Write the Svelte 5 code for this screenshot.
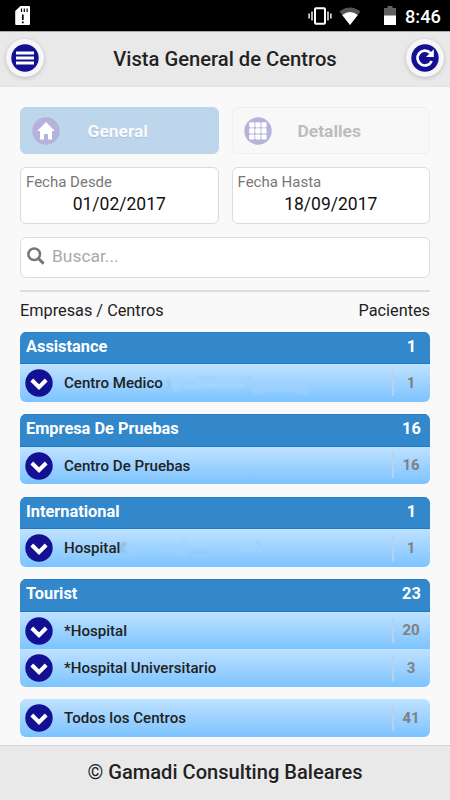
<script>
  const fechas = [
    { etiqueta: 'Fecha Desde', valor: '01/02/2017' },
    { etiqueta: 'Fecha Hasta', valor: '18/09/2017' }
  ];

  const grupos = [
    {
      empresa: 'Assistance',
      pacientes: 1,
      centros: [{ nombre: 'Centro Medico', pacientes: 1, borrado: 'medico' }]
    },
    {
      empresa: 'Empresa De Pruebas',
      pacientes: 16,
      centros: [{ nombre: 'Centro De Pruebas', pacientes: 16 }]
    },
    {
      empresa: 'International',
      pacientes: 1,
      centros: [{ nombre: 'Hospital', pacientes: 1, borrado: 'hospital' }]
    },
    {
      empresa: 'Tourist',
      pacientes: 23,
      centros: [
        { nombre: '*Hospital', pacientes: 20 },
        { nombre: '*Hospital Universitario', pacientes: 3 }
      ]
    },
    {
      empresa: '',
      pacientes: 41,
      centros: [{ nombre: 'Todos los Centros', pacientes: 41 }]
    }
  ];
</script>

<div class="pantalla">
  <div class="estado">
    <svg class="sd" width="16" height="20" viewBox="0 0 16 20">
      <path d="M5.5 0H14Q15 0 15 1V18Q15 19 14 19H1.2Q.2 19 .2 18V5Z" fill="#fff" />
      <path d="M6.5 2.5V6M9.3 2.5V6M12.1 2.5V6" stroke="#000" stroke-width="1.2" />
      <path d="M7.8 8.5V14M7.8 15.5V17.3" stroke="#000" stroke-width="1.7" />
    </svg>
    <svg class="vibrar" width="24" height="18" viewBox="0 0 24 18">
      <rect x="7" y="1.3" width="10" height="15.4" rx="1" fill="none" stroke="#fff" stroke-width="2" />
      <path d="M4 4.5V13.5M20 4.5V13.5M1.1 6.5V11.5M22.9 6.5V11.5" stroke="#fff" stroke-width="1.4" />
    </svg>
    <svg class="wifi" width="22" height="18" viewBox="0 0 22 18">
      <path d="M11 18L.5 4.5Q11-3.5 21.5 4.5Z" fill="#555" />
      <path d="M11 18L3.2 8Q11 2 18.8 8Z" fill="#fff" />
    </svg>
    <svg class="bateria" width="12" height="19" viewBox="0 0 12 19">
      <path d="M0 2H3.5V0H8.5V2H12V10H0Z" fill="#606060" />
      <path d="M0 9.5H12V19H0Z" fill="#fff" />
    </svg>
    <span class="hora">8:46</span>
  </div>

  <header>
    <button class="redondo" aria-label="Menú">
      <svg width="28" height="28" viewBox="0 0 28 28">
        <circle cx="14" cy="14" r="13.7" fill="#131094" />
        <path d="M5 9H23M5 14H23M5 19H23" stroke="#fff" stroke-width="2.8" />
      </svg>
    </button>
    <h1>Vista General de Centros</h1>
    <button class="redondo" aria-label="Actualizar">
      <svg width="28" height="28" viewBox="0 0 28 28">
        <circle cx="14" cy="14" r="13.7" fill="#131094" />
        <path d="M19.3 9A7.4 7.4 0 1 0 20.7 17" fill="none" stroke="#fff" stroke-width="2.7" />
        <path d="M22.8 5.2V13H15Z" fill="#fff" />
      </svg>
    </button>
  </header>

  <main>
    <div class="pareja">
      <button class="pestana activa">
        <svg width="28" height="28" viewBox="0 0 28 28">
          <circle cx="14" cy="14" r="13.7" fill="#b5b2dc" />
          <path d="M14 5L5.2 14H8V22.5H12V17H16V22.5H20V14H22.8Z" fill="#fff" />
        </svg>
        <span>General</span>
      </button>
      <button class="pestana">
        <svg width="28" height="28" viewBox="0 0 28 28">
          <circle cx="14" cy="14" r="13.7" fill="#b5b2dc" />
          {#each [5.2, 11.3, 17.4] as y}
            {#each [5.2, 11.3, 17.4] as x}
              <rect {x} {y} width="5.2" height="5.2" rx="0.8" fill="#fff" />
            {/each}
          {/each}
        </svg>
        <span>Detalles</span>
      </button>
    </div>

    <div class="pareja fechas">
      {#each fechas as fecha}
        <div class="fecha">
          <span class="etiqueta">{fecha.etiqueta}</span>
          <span class="valor">{fecha.valor}</span>
        </div>
      {/each}
    </div>

    <div class="buscador">
      <svg width="18" height="18" viewBox="0 0 18 18" fill="none" stroke="#777" stroke-width="2.5">
        <circle cx="7.2" cy="7.2" r="5.8" />
        <path d="M11.2 11.2L16.6 16.6" stroke-width="3" />
      </svg>
      <span>Buscar...</span>
    </div>

    <div class="titulos">
      <span>Empresas / Centros</span>
      <span>Pacientes</span>
    </div>

    <div class="lista">
      {#each grupos as grupo}
        <section class="grupo">
          {#if grupo.empresa}
            <div class="empresa">
              <span>{grupo.empresa}</span>
              <span class="total">{grupo.pacientes}</span>
            </div>
          {/if}
          {#each grupo.centros as centro}
            <div class="centro">
              <svg width="28" height="28" viewBox="0 0 28 28">
                <circle cx="14" cy="14" r="13.7" fill="#131094" />
                <path d="M6.8 11L14 18.2L21.2 11" fill="none" stroke="#fff" stroke-width="4" />
              </svg>
              <span class="nombre">{centro.nombre}</span>
              <span class="cantidad">{centro.pacientes}</span>
              {#if centro.borrado === 'medico'}
                <svg class="borrado" width="175" height="28" viewBox="0 0 175 28">
                  <path d="M25 10Q22 11 25 14T23 18" stroke="#7ea8c9" fill="none" />
                  <ellipse cx="33" cy="15" rx="6" ry="8" fill="#a5d6ff" />
                  <path d="M40 18Q70 15 102 17" stroke="#a8d8ff" stroke-width="5" fill="none" />
                  <path d="M112 20Q138 14 162 20" stroke="#9ed2ff" stroke-width="11" stroke-linecap="round" fill="none" />
                  <path d="M54 9H70M98 9H108M99 18H104" stroke="#92bfdf" fill="none" />
                </svg>
              {:else if centro.borrado === 'hospital'}
                <svg class="borrado hospital" width="170" height="28" viewBox="0 0 170 28">
                  <path d="M26 9Q20 10 22 16L27 18M27 9L24 13" stroke="#7d9fba" stroke-width="1.6" fill="none" />
                  <path d="M29 19L38 14M63 17Q74 13 88 20" stroke="#9dd2ff" stroke-width="7" fill="none" />
                  <path d="M83 9L86 6M93 18H106M157 7L161 11L158 19" stroke="#86b5d9" fill="none" />
                  <ellipse cx="151" cy="15" rx="12" ry="4" fill="#a2d5ff" />
                </svg>
              {/if}
            </div>
          {/each}
        </section>
      {/each}
    </div>
  </main>

  <footer><span class="copia">©</span> Gamadi Consulting Baleares</footer>
</div>

<style>
  :global(body) {
    margin: 0;
  }

  .pantalla {
    width: 450px;
    height: 800px;
    overflow: hidden;
    display: flex;
    flex-direction: column;
    background: #f9f9f9;
    color: #222;
    font-family: Roboto, sans-serif;
  }

  svg {
    display: block;
    flex: none;
  }

  button {
    font: inherit;
    padding: 0;
    cursor: pointer;
  }

  .estado {
    height: 31px;
    box-sizing: border-box;
    flex: none;
    display: flex;
    align-items: center;
    padding: 0 10px 0 15px;
    background: #000;
    color: #fff;
  }

  .vibrar {
    margin-left: auto;
  }

  .wifi {
    margin-left: 7px;
  }

  .bateria {
    margin-left: 23px;
  }

  .hora {
    width: 35px;
    margin-left: 9px;
    font-size: 18.2px;
    font-weight: 500;
    line-height: 31px;
    padding-top: 2px;
    white-space: nowrap;
  }

  header {
    height: 56px;
    box-sizing: border-box;
    flex: none;
    display: flex;
    align-items: center;
    justify-content: space-between;
    padding: 0 6px;
    background: #e9e9e9;
    border-top: 1px solid #aaa;
    border-bottom: 1px solid #e2e2e2;
  }

  h1 {
    margin: 0;
    font-size: 20.2px;
    font-weight: 500;
    text-shadow: 0 1px 0 #f3f3f3;
  }

  .redondo {
    width: 38px;
    height: 38px;
    display: grid;
    place-items: center;
    border: 0;
    border-radius: 50%;
    background: #f6f6f6;
    box-shadow: 0 1px 4px rgba(0, 0, 0, 0.2);
    margin-bottom: 2px;
  }

  main {
    flex: 1;
    min-height: 0;
    padding: 20px 20px 0;
  }

  .pareja {
    display: grid;
    grid-template-columns: 1fr 1fr;
    gap: 13px;
  }

  .pestana {
    height: 47px;
    box-sizing: border-box;
    display: flex;
    align-items: center;
    padding: 0 46px 0 11px;
    border: 1px solid #f0f0f0;
    border-radius: 6px;
    background: #f8f8f8;
    color: #bdbdbd;
    font-size: 17.4px;
    font-weight: 700;
  }

  .pestana span {
    flex: 1;
    padding-left: 4px;
    text-align: center;
  }

  .activa {
    border-color: #bcd7ed;
    background: #bdd6ec;
    color: #fafafa;
    text-shadow: 0 1px 1px #a5c0d8;
  }

  .fechas {
    margin-top: 13px;
  }

  .fecha {
    height: 57px;
    box-sizing: border-box;
    display: flex;
    flex-direction: column;
    padding: 4px 5px;
    border: 1px solid #dcdcdc;
    border-radius: 6px;
    background: #fff;
  }

  .etiqueta {
    color: #777;
    font-size: 15px;
    line-height: 20px;
  }

  .valor {
    color: #111;
    font-size: 17.5px;
    line-height: 24px;
    text-align: center;
  }

  .buscador {
    height: 41px;
    box-sizing: border-box;
    display: flex;
    align-items: center;
    gap: 7px;
    margin-top: 13px;
    padding: 0 6px 3px;
    border: 1px solid #dcdcdc;
    border-radius: 6px;
    background: #fff;
    color: #aaa;
    font-size: 17.4px;
  }

  .titulos {
    display: flex;
    justify-content: space-between;
    height: 41.8px;
    box-sizing: border-box;
    margin-top: 12px;
    border-top: 2px solid #dedede;
    font-size: 16.3px;
    line-height: 37px;
  }

  .lista {
    display: flex;
    flex-direction: column;
    gap: 12.5px;
  }

  .grupo {
    overflow: hidden;
    border-radius: 6px;
  }

  .empresa {
    height: 32.5px;
    box-sizing: border-box;
    display: flex;
    justify-content: space-between;
    padding: 0 0 0 6px;
    border: 1px solid #1b7ac2;
    border-width: 1px 0;
    border-top-color: #2a80c6;
    background: #3388cc;
    color: #fff;
    font-size: 16.35px;
    font-weight: 700;
    line-height: 27px;
  }

  .total {
    width: 37px;
    text-align: center;
  }

  .centro {
    position: relative;
    height: 37.5px;
    display: flex;
    align-items: center;
    padding-left: 5px;
    background: linear-gradient(#bfe2ff, #7cc3ff);
  }

  .nombre {
    flex: 1;
    margin-left: 11px;
    font-size: 15.1px;
    font-weight: 500;
  }

  .cantidad {
    width: 34px;
    height: 25px;
    padding-right: 2px;
    border-left: 2px solid #b9d2e8;
    color: #808080;
    font-size: 15px;
    font-weight: 700;
    line-height: 25px;
    text-align: center;
  }

  .borrado {
    position: absolute;
    left: 124px;
    top: 5px;
    opacity: 0.6;
    filter: blur(0.8px);
  }

  .hospital {
    left: 79px;
  }

  footer {
    height: 55px;
    box-sizing: border-box;
    flex: none;
    border-top: 1px solid #d2d2d2;
    background: #e9e9e9;
    font-size: 20.1px;
    font-weight: 500;
    line-height: 53px;
    text-align: center;
    text-shadow: 0 1px 0 #f3f3f3;
  }

  .copia {
    font-weight: 400;
  }
</style>
